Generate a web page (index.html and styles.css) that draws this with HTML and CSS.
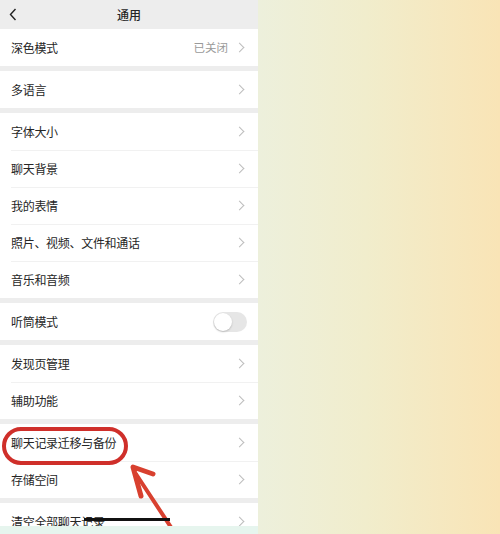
FILE: index.html
```html
<!DOCTYPE html>
<html lang="zh-CN">

<head>
    <meta charset="UTF-8">
    <title>通用</title>
    <link rel="stylesheet" href="styles.css">
</head>

<body>

    <div class="phone">
        <div class="nav">
            <svg class="back" width="8" height="13" viewBox="0 0 8 13"><path d="M6.5 1L1.5 6.5L6.5 12" fill="none" stroke="#222" stroke-width="1.4"/></svg>
            <span class="title">通用</span>
        </div>

        <div class="group">
            <div class="row"><span class="label">深色模式</span><span class="value">已关闭</span><i class="chev"></i></div>
        </div>

        <div class="group">
            <div class="row"><span class="label">多语言</span><i class="chev"></i></div>
        </div>

        <div class="group">
            <div class="row"><span class="label">字体大小</span><i class="chev"></i></div>
            <div class="row"><span class="label">聊天背景</span><i class="chev"></i></div>
            <div class="row"><span class="label">我的表情</span><i class="chev"></i></div>
            <div class="row"><span class="label">照片、视频、文件和通话</span><i class="chev"></i></div>
            <div class="row"><span class="label">音乐和音频</span><i class="chev"></i></div>
        </div>

        <div class="group">
            <div class="row"><span class="label">听筒模式</span><span class="switch"><span class="knob"></span></span></div>
        </div>

        <div class="group">
            <div class="row"><span class="label">发现页管理</span><i class="chev"></i></div>
            <div class="row"><span class="label">辅助功能</span><i class="chev"></i></div>
        </div>

        <div class="group">
            <div class="row"><span class="label">聊天记录迁移与备份</span><i class="chev"></i></div>
            <div class="row"><span class="label">存储空间</span><i class="chev"></i></div>
        </div>

        <div class="group">
            <div class="row"><span class="label">清空全部聊天记录</span><i class="chev"></i></div>
        </div>

        <!-- 标注 -->
        <div class="ring"></div>
        <svg class="arrow" width="80" height="80" viewBox="0 0 80 80">
            <path d="M58 80L14 13" fill="none" stroke="#d8402f" stroke-width="4" stroke-linecap="round"/>
            <path d="M31 13L11 6L19 35" fill="none" stroke="#d8402f" stroke-width="5" stroke-linecap="round" stroke-linejoin="round"/>
        </svg>
        <div class="home-bar"></div>
        <div class="fade"></div>
    </div>

    <div class="backdrop"></div>

</body>

</html>
```

FILE: styles.css
```css
html, body {
    margin: 0;
    height: 534px;
    overflow: hidden;
}

body {
    display: flex;
    font: 12px/1 "Noto Sans CJK SC", "Noto Sans", sans-serif;
    color: #262626;
}

.phone {
    position: relative;
    width: 258px;
    flex: none;
    display: flex;
    flex-direction: column;
    background: #ededed;
    overflow: hidden;
}

.nav {
    height: 29px;
    flex: none;
    display: flex;
    align-items: center;
    justify-content: center;
    position: relative;
}

.back {
    position: absolute;
    left: 9px;
    top: 8px;
}

.title {
    font-weight: 500;
    font-size: 12px;
}

.group {
    background: #fff;
    margin-bottom: 5px;
    flex: none;
}

.row {
    height: 37px;
    display: flex;
    align-items: center;
    padding: 0 12px 0 11px;
    position: relative;
}

.row + .row:before {
    content: "";
    position: absolute;
    left: 11px;
    right: 0;
    top: 0;
    border-top: 1px solid #f1f1f1;
}

.label {
    flex: 1;
    letter-spacing: -0.3px;
}

.value {
    color: #9a9a9a;
    font-size: 11.5px;
    margin-right: 8px;
}

.chev {
    width: 6px;
    height: 6px;
    border-top: 1.2px solid #bdbdbd;
    border-right: 1.2px solid #bdbdbd;
    transform: rotate(45deg);
    margin-right: 3px;
}

.switch {
    width: 34px;
    height: 20px;
    border-radius: 10px;
    background: #e6e6e6;
    margin-right: -1px;
    position: relative;
}

.knob {
    position: absolute;
    left: 1px;
    top: 1px;
    width: 18px;
    height: 18px;
    border-radius: 50%;
    background: #fff;
    box-shadow: 0 1px 2px rgba(0, 0, 0, .2);
}

.ring {
    position: absolute;
    left: 2px;
    top: 427px;
    width: 118px;
    height: 30px;
    border: 4px solid #cf2f2a;
    border-radius: 19px;
}

.arrow {
    position: absolute;
    left: 122px;
    top: 461px;
}

.home-bar {
    position: absolute;
    left: 84px;
    top: 518px;
    width: 86px;
    height: 3px;
    background: #111;
}

.fade {
    position: absolute;
    left: 0;
    right: 0;
    bottom: 0;
    height: 8px;
    background: #e6f5ee;
}

.backdrop {
    flex: 1;
    background: linear-gradient(to right, #edf0dc, #f1edcc 45%, #f9e4b6);
}
```
